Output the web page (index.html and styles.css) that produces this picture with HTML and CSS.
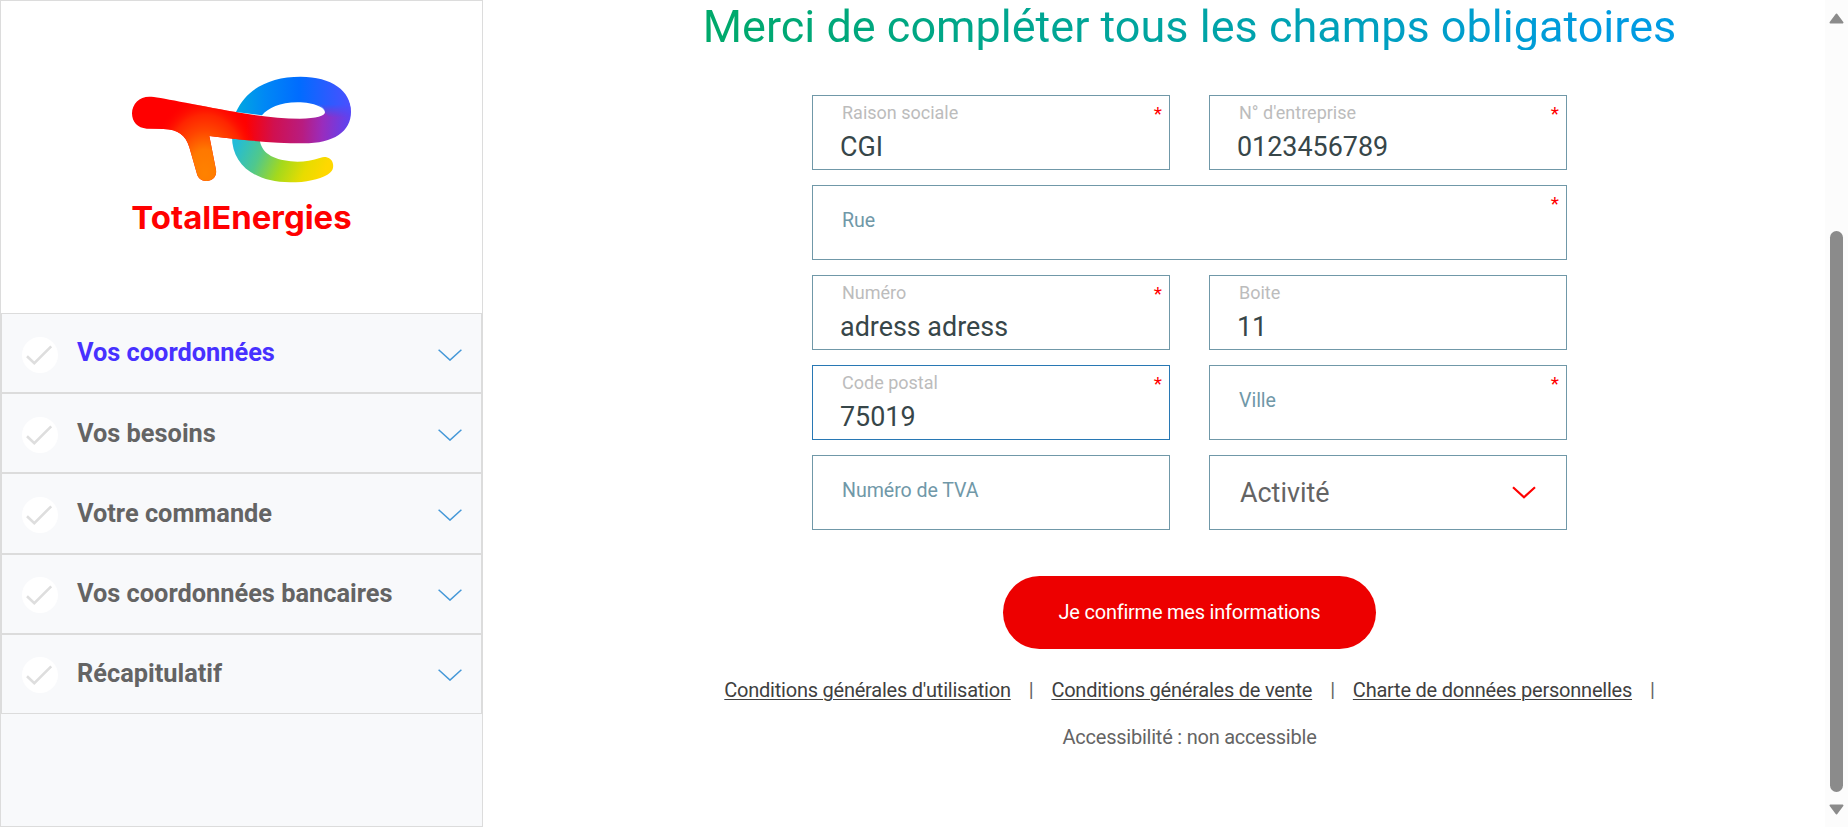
FILE: index.html
```html
<!DOCTYPE html>
<html lang="fr">
<head>
<meta charset="utf-8">
<title>TotalEnergies</title>
<link rel="stylesheet" href="styles.css">
</head>
<body>
<svg class="defs" width="0" height="0">
  <symbol id="check" viewBox="0 0 36 36"><circle cx="18" cy="18" r="18" fill="#fff"/><path d="M5 19.2l7.3 7L29.2 9.3" fill="none" stroke="#dedede" stroke-width="2.6"/></symbol>
  <symbol id="chevron" viewBox="0 0 24 12"><path d="M.6.8L12 11.1 23.4.8" fill="none" stroke="currentColor"/></symbol>
</svg>
<div class="page">
  <aside class="sidebar">
    <div class="brand">
      <svg class="logo" viewBox="0 0 780 570" role="img" aria-label="TotalEnergies">
        <defs>
          <linearGradient id="top" gradientUnits="userSpaceOnUse" x1="378" y1="150" x2="722" y2="150"><stop offset="0" stop-color="#00a8e0"/><stop offset=".25" stop-color="#0088f5"/><stop offset=".55" stop-color="#006cff"/><stop offset=".8" stop-color="#2a5cff"/><stop offset="1" stop-color="#4a50ff"/></linearGradient>
          <linearGradient id="bar" gradientUnits="userSpaceOnUse" x1="66" y1="180" x2="722" y2="200"><stop offset="0" stop-color="#f00"/><stop offset=".52" stop-color="#f00"/><stop offset=".65" stop-color="#d01050"/><stop offset=".78" stop-color="#b81c80"/><stop offset=".87" stop-color="#9a2cbc"/><stop offset="1" stop-color="#5a44f4"/></linearGradient>
          <linearGradient id="low" gradientUnits="userSpaceOnUse" x1="385" y1="235" x2="640" y2="345"><stop offset="0" stop-color="#22bcd8"/><stop offset=".28" stop-color="#50c88c"/><stop offset=".54" stop-color="#a4d91c"/><stop offset=".8" stop-color="#e8dc00"/><stop offset="1" stop-color="#ffd800"/></linearGradient>
          <radialGradient id="glow" gradientUnits="userSpaceOnUse" cx="285" cy="340" r="235" gradientTransform="translate(285 340) scale(.72 1) translate(-285 -340)"><stop offset="0" stop-color="#ff8200"/><stop offset=".3" stop-color="#ff7800"/><stop offset=".55" stop-color="#ff4400"/><stop offset=".75" stop-color="#ff2400"/><stop offset="1" stop-color="#f00" stop-opacity="0"/></radialGradient>
          <linearGradient id="fade" gradientUnits="userSpaceOnUse" x1="645" y1="133" x2="645" y2="172"><stop offset="0" stop-color="#fff"/><stop offset="1" stop-color="#000"/></linearGradient>
          <mask id="bend" maskUnits="userSpaceOnUse" x="0" y="0" width="780" height="570"><path fill="#fff" d="M340 30H601V180H340z"/><path fill="url(#fade)" d="M600 30H780V280H600z"/></mask>
        </defs>
        <path fill="url(#low)" d="M366 230C366 312 432 367 540 367 590 367 626 358 652 344 667 336 671 326 669 312 666 294 648 288 632 293 600 303 574 307 542 304 488 299 453 278 449 238z"/>
        <path fill="url(#bar)" d="M118 110C145 110 250 134 378 156 450 169 510 176 570 176 620 176 645 167 645 157 645 147 637 139 624 133L650 110H707C718 124 723 140 723 155 723 214 672 250 580 250 480 250 400 240 298 228L318 330C321 350 307 363 289 363 274 363 264 354 261 342L238 262C227 224 204 209 160 207L110 206C83 204 66 186 66 160 66 132 88 110 118 110z"/>
        <path fill="url(#glow)" d="M118 110C145 110 250 134 378 156L430 165V243L298 228 318 330C321 350 307 363 289 363 274 363 264 354 261 342L238 262C227 224 204 209 160 207L110 206C83 204 66 186 66 160 66 132 88 110 118 110z"/>
        <path fill="url(#top)" mask="url(#bend)" d="M378 156C410 86 480 50 572 50 665 50 723 92 723 155 723 180 715 200 700 215L645 158C645 144 615 127 562 127 510 127 474 144 456 166z"/>
        <text class="wordmark" x="64" y="507" textLength="661" lengthAdjust="spacingAndGlyphs">TotalEnergies</text>
      </svg>
    </div>
    <nav class="steps">
      <div class="step active"><svg class="check"><use href="#check"/></svg><span class="step-name">Vos coordonnées</span><svg class="chev"><use href="#chevron"/></svg></div>
      <div class="step"><svg class="check"><use href="#check"/></svg><span class="step-name">Vos besoins</span><svg class="chev"><use href="#chevron"/></svg></div>
      <div class="step"><svg class="check"><use href="#check"/></svg><span class="step-name">Votre commande</span><svg class="chev"><use href="#chevron"/></svg></div>
      <div class="step"><svg class="check"><use href="#check"/></svg><span class="step-name">Vos coordonnées bancaires</span><svg class="chev"><use href="#chevron"/></svg></div>
      <div class="step"><svg class="check"><use href="#check"/></svg><span class="step-name">Récapitulatif</span><svg class="chev"><use href="#chevron"/></svg></div>
    </nav>
  </aside>
  <main class="main">
    <h1 class="title">Merci de compléter tous les champs obligatoires</h1>
    <form class="form">
      <div class="field"><span class="label">Raison sociale</span><span class="value">CGI</span><span class="req">*</span></div>
      <div class="field"><span class="label">N° d'entreprise</span><span class="value">0123456789</span><span class="req">*</span></div>
      <div class="field wide empty"><span class="label">Rue</span><span class="req">*</span></div>
      <div class="field"><span class="label">Numéro</span><span class="value">adress adress</span><span class="req">*</span></div>
      <div class="field"><span class="label">Boite</span><span class="value">11</span></div>
      <div class="field focus"><span class="label">Code postal</span><span class="value">75019</span><span class="req">*</span></div>
      <div class="field empty"><span class="label">Ville</span><span class="req">*</span></div>
      <div class="field empty"><span class="label">Numéro de TVA</span></div>
      <div class="field select"><span>Activité</span><svg class="arrow" viewBox="0 0 24 13"><path d="M1 1.2L12 11.2 23 1.2" fill="none" stroke="#f00" stroke-width="2.2"/></svg></div>
    </form>
    <button class="confirm" type="button">Je confirme mes informations</button>
    <footer class="links">
      <a>Conditions générales d'utilisation</a><i>|</i><a>Conditions générales de vente</a><i>|</i><a>Charte de données personnelles</a><i>|</i>
    </footer>
    <p class="access">Accessibilité : non accessible</p>
  </main>
  <div class="scrollbar">
    <svg width="15" height="11" viewBox="0 0 15 11"><path d="M7.5 1.5L13.5 9.5H1.5z" fill="#8b8b8b" stroke="#8b8b8b" stroke-width="2" stroke-linejoin="round"/></svg>
    <div class="thumb"></div>
    <svg width="15" height="11" viewBox="0 0 15 11"><path d="M7.5 9.5L13.5 1.5H1.5z" fill="#8b8b8b" stroke="#8b8b8b" stroke-width="2" stroke-linejoin="round"/></svg>
  </div>
</div>
</body>
</html>
```
FILE: styles.css
```css
* { box-sizing: border-box; }
body { margin: 0; font-family: Roboto, "Liberation Sans", sans-serif; background: #fff; color: #646464; overflow: hidden; }
.defs { position: absolute; }
.page { display: flex; height: 827px; }

.sidebar { width: 483px; flex: none; border: 1px solid #dcdcdc; background: #f8f9fb; }
.brand { height: 312px; background: #fff; padding: 59px 0 0 109px; }
.logo { display: block; width: 260px; height: 190px; }
.wordmark { font-family: Inter, sans-serif; font-weight: 700; font-size: 95px; fill: #f00; }
.step { height: 80.2px; border: 1px solid #dcdcdc; display: flex; align-items: center; padding: 3px 19px 0 20px; }
.check { width: 36px; height: 36px; flex: none; }
.step-name { flex: 1; margin: -4px 0 0 19px; font-size: 25.35px; font-weight: 700; line-height: 30px; white-space: nowrap; }
.active .step-name { color: #4731ff; margin-top: -5px; }
.chev { width: 24px; height: 12px; color: #4598d8; stroke-width: 1.5; }

.main { width: 1271px; margin-left: 71px; flex: none; display: flex; flex-direction: column; align-items: center; }
.title { margin: 0; height: 50px; line-height: 53px; font-size: 45px; font-weight: 400; white-space: nowrap; color: transparent; background: linear-gradient(90deg, #00a96a, #00a4a4 50%, #009be0 92%, #009ce4); background-clip: text; -webkit-background-clip: text; }
.form { width: 755px; margin-top: 45px; display: grid; grid-template-columns: 358px 358px; justify-content: space-between; row-gap: 15px; }
.field { position: relative; height: 75px; border: 1px solid #7098a8; padding: 6px 28px 0 27px; display: flex; flex-direction: column; }
.wide { grid-column: 1 / -1; }
.focus { border-color: #2878b4; }
.label { padding-left: 2px; font-size: 18px; line-height: 22px; color: #bcbcbc; }
.value { font-size: 26.9px; line-height: 32px; margin-top: 7px; color: #374649; white-space: nowrap; }
.empty .label { font-size: 19.6px; padding-top: 18px; color: #7098a8; letter-spacing: -.05px; }
.req { position: absolute; right: 7px; top: 6px; font-size: 19px; line-height: 24px; color: #f00; }
.select { flex-direction: row; align-items: center; justify-content: space-between; padding: 0 30px 0 30px; font-size: 26.9px; }
.arrow { width: 24px; height: 13px; }
.confirm { width: 373px; height: 73px; margin: 46px 0 0; padding: 0 0 2px; border: 0; border-radius: 37px; background: #ed0000; color: #fff; font: 400 20px Roboto, sans-serif; letter-spacing: -.23px; }
.links { display: flex; margin-top: 28px; font-size: 20px; line-height: 26px; white-space: nowrap; gap: 18px; letter-spacing: -.23px; }
.links a { color: #404040; text-decoration: underline; text-decoration-thickness: 1px; text-underline-offset: 2px; }
.links i { font-style: normal; }
.access { margin: 21px 0 0; font-size: 20px; line-height: 26px; letter-spacing: -.23px; }

.scrollbar { width: 23px; flex: none; background: #fcfcfc; display: flex; flex-direction: column; align-items: center; padding: 13px 0 12px; }
.thumb { width: 13px; height: 561px; margin: 207px 0 auto; border-radius: 7px; background: #8b8b8b; }
```
